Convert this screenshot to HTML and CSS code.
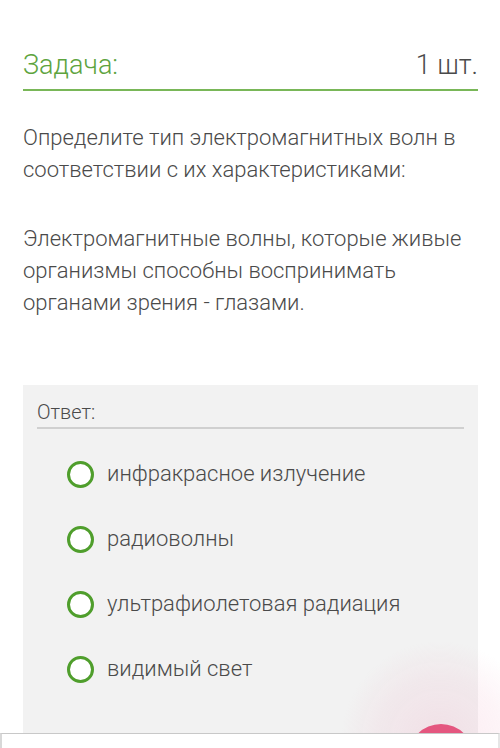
FILE: index.html
```html
<!DOCTYPE html>
<html lang="ru">
<head>
<meta charset="utf-8">
<link rel="stylesheet" href="styles.css">
</head>
<body>
<div class="page">
  <header class="task-head">
    <span class="task-title">Задача:</span>
    <span class="task-count">1 шт.</span>
  </header>
  <div class="question">
    <p>Определите тип электромагнитных волн в соответствии с их характеристиками:</p>
    <p>Электромагнитные волны, которые живые организмы способны воспринимать органами зрения - глазами.</p>
  </div>
  <section class="answer">
    <div class="answer-label">Ответ:</div>
    <ul class="options">
      <li class="option"><span class="radio"></span><span>инфракрасное излучение</span></li>
      <li class="option"><span class="radio"></span><span>радиоволны</span></li>
      <li class="option"><span class="radio"></span><span>ультрафиолетовая радиация</span></li>
      <li class="option"><span class="radio"></span><span>видимый свет</span></li>
    </ul>
  </section>
</div>
<div class="fab-glow"></div>
<div class="fab"></div>
<div class="bottom-bar"></div>
</body>
</html>
```
FILE: styles.css
```css
html, body {
  margin: 0;
  padding: 0;
  background: #ffffff;
  height: 100%;
  overflow: hidden;
}
body {
  font-family: Roboto, "Noto Sans", sans-serif;
  font-weight: 300;
  color: #4a4a4a;
}
.page {
  padding: 0 22px 0 23px;
}
.task-head {
  display: flex;
  justify-content: space-between;
  align-items: baseline;
  padding-top: 49px;
  padding-bottom: 8px;
  border-bottom: 2px solid #79b758;
}
.task-title {
  font-size: 27px;
  color: #5ea43e;
}
.task-count {
  font-size: 27px;
  color: #4a4a4a;
}
.question {
  padding-top: 31px;
  font-size: 22px;
  line-height: 32px;
}
.question p {
  margin: 0 0 37px 0;
}
.question p:last-child {
  margin-bottom: 0;
}
.answer {
  margin-top: 66px;
  background: #f2f2f2;
  padding: 14px 14px 80px 14px;
}
.answer-label {
  font-size: 20px;
  line-height: 26px;
  padding-bottom: 2px;
  border-bottom: 2px solid #d0d0d0;
}
.options {
  list-style: none;
  margin: 0;
  padding: 29px 0 0 30px;
  display: flex;
  flex-direction: column;
  gap: 33px;
}
.option {
  display: flex;
  align-items: center;
  gap: 13px;
  font-size: 22px;
  line-height: 32px;
  color: #4a4a4a;
}
.radio {
  width: 21px;
  height: 21px;
  border: 3px solid #4f9e2c;
  border-radius: 50%;
  background: #ffffff;
  flex: none;
}
.fab-glow {
  position: fixed;
  left: 340px;
  top: 640px;
  width: 200px;
  height: 200px;
  border-radius: 50%;
  background: radial-gradient(circle, rgba(240, 160, 190, 0.22) 0%, rgba(240, 170, 195, 0.12) 45%, rgba(255, 255, 255, 0) 70%);
}
.fab {
  position: fixed;
  left: 408px;
  top: 724px;
  width: 66px;
  height: 66px;
  border-radius: 50%;
  background: #e4567f;
}
.bottom-bar {
  position: fixed;
  left: 0;
  right: 0;
  top: 733px;
  bottom: 0;
  background: #ffffff;
  border-top: 1px solid #c8c8c8;
  border-left: 2px solid #d8d8d8;
  border-right: 2px solid #e6e6e6;
}
```
